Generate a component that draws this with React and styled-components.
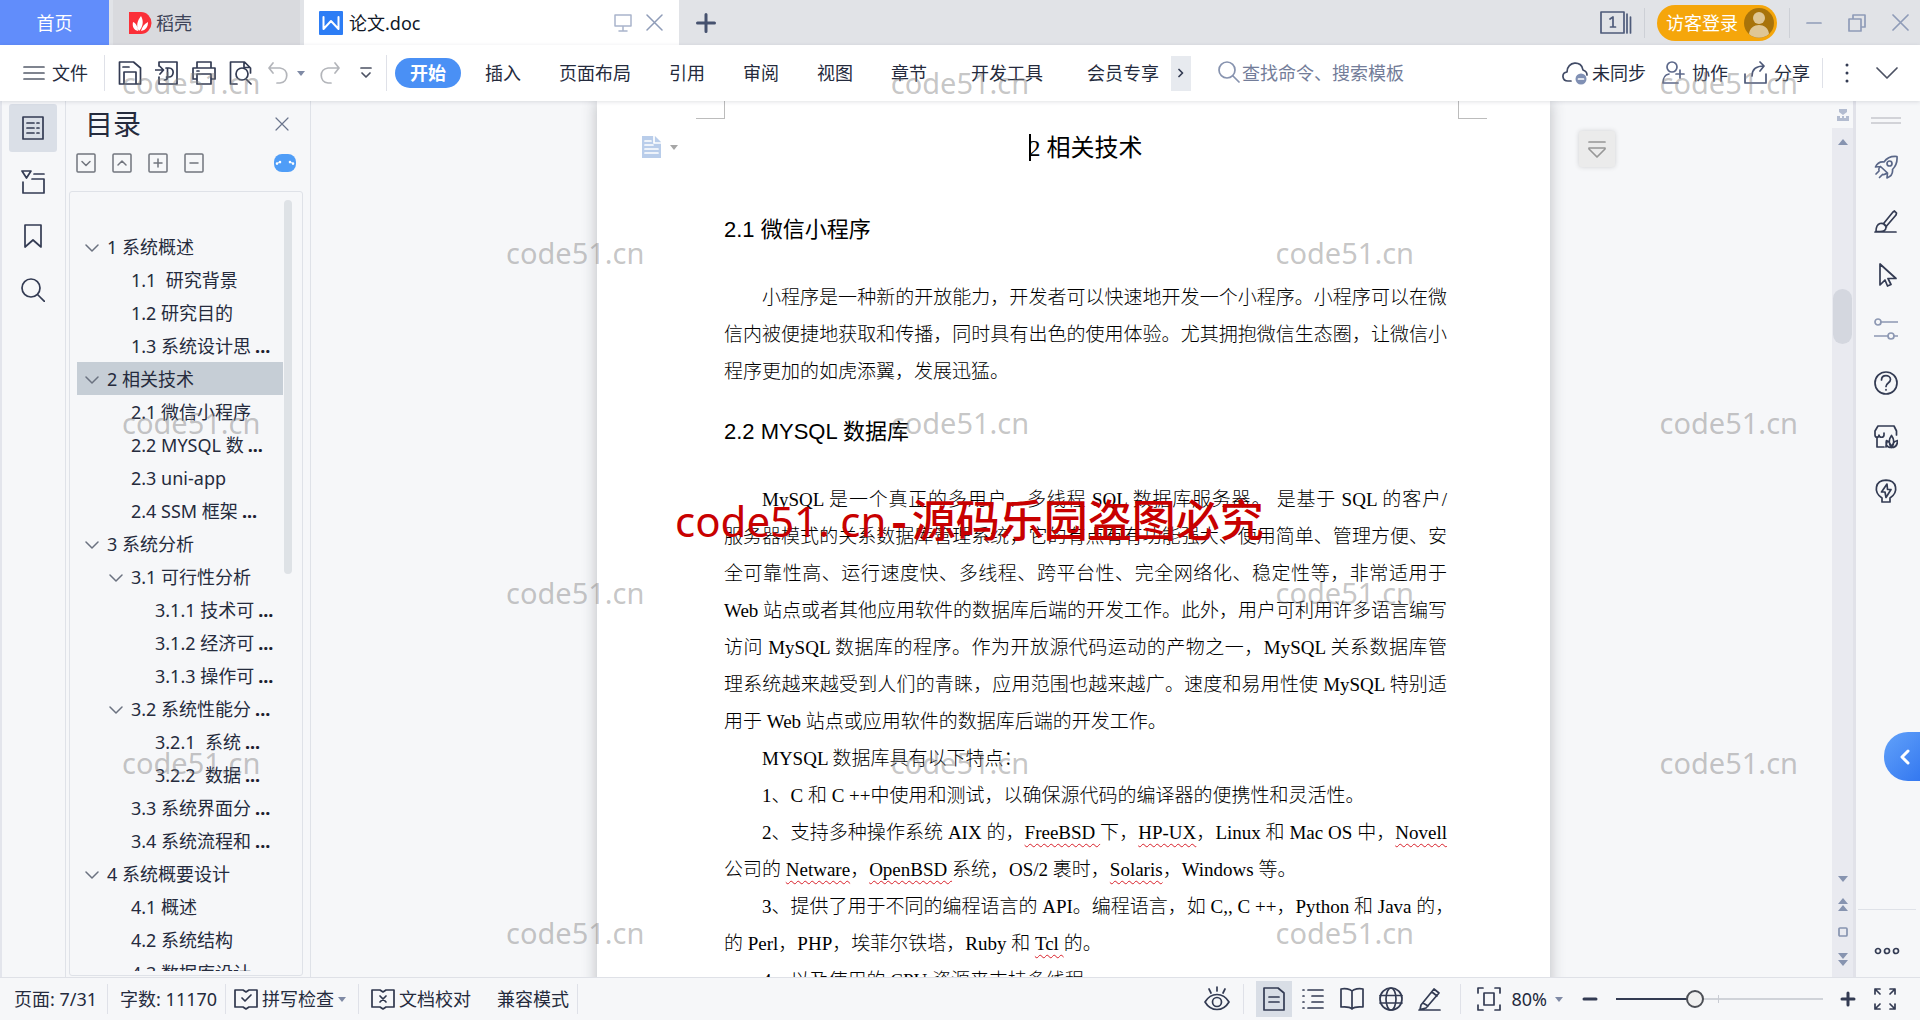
import React from "react";
import styled, { createGlobalStyle, css } from "styled-components";

const Global = createGlobalStyle`
  *, *::before, *::after { box-sizing: border-box; }
  html, body, #root { height: 100%; }
  body {
    margin: 0;
    overflow: hidden;
    color: #252b3d;
    font: 18px/24px "Noto Sans", "Noto Sans CJK SC", sans-serif;
  }
  button, input { font: inherit; color: inherit; }
  button { border: 0; padding: 0; background: none; white-space: nowrap; }
  h1, h2, p, ul { margin: 0; padding: 0; font-weight: 400; }
  ul { list-style: none; }
`;

/* ---------- shared parts ---------- */

const Svg = styled.svg`
  display: block;
  flex: none;
  fill: none;
  stroke: ${(p) => p.$color || "#333b53"};
  stroke-width: ${(p) => p.$w || 1.7};
  stroke-linecap: round;
  stroke-linejoin: round;
`;

const Icon = ({ w = 24, h = 24, color, sw, children }) => (
  <Svg width={w} height={h} viewBox={`0 0 ${w} ${h}`} $color={color} $w={sw} aria-hidden="true">
    {children}
  </Svg>
);

const Caret = ({ color = "#7f8aa5" }) => (
  <Svg width="8" height="6" viewBox="0 0 8 6" aria-hidden="true">
    <path d="M0 1h8L4 6z" fill={color} stroke="none" />
  </Svg>
);

const Divider = styled.span`
  flex: none;
  width: 1px;
  height: ${(p) => p.$h || 30}px;
  background: ${(p) => p.$color || "#dfe1e8"};
`;

const Row = styled.div`
  display: flex;
  align-items: center;
  gap: ${(p) => p.$gap || 0}px;
`;

const TextButton = styled.button`
  display: flex;
  align-items: center;
  gap: ${(p) => p.$gap || 6}px;
`;

const Shell = styled.div`
  position: relative;
  display: flex;
  flex-direction: column;
  height: 100vh;
  overflow: hidden;
  background: #f6f7f9;
`;

/* ---------- title bar ---------- */

const TitleBar = styled.header`
  display: flex;
  align-items: center;
  justify-content: space-between;
  flex: none;
  height: 45px;
  background: #e1e3e7;
`;

const Tabs = styled.div`
  display: flex;
  gap: 4px;
  height: 45px;
`;

const Tab = styled.button`
  display: flex;
  align-items: center;
  gap: 6px;
  height: 45px;
  ${(p) =>
    p.$kind === "home" &&
    css`
      width: 109px;
      justify-content: center;
      color: #fff;
      background: #618dfb;
    `}
  ${(p) =>
    p.$kind === "idle" &&
    css`
      width: 187px;
      gap: 4px;
      padding-left: 16px;
      color: #3d4358;
      background: #d9dade;
    `}
`;

const ActiveTab = styled.div`
  display: flex;
  align-items: center;
  justify-content: space-between;
  width: 375px;
  padding: 0 16px 0 15px;
  color: #111827;
  background: #fff;
`;

const AddTab = styled.button`
  display: grid;
  place-items: center;
  width: 45px;
`;

const WindowControls = styled.div`
  display: flex;
  align-items: center;
  gap: 16px;
  padding-right: 11px;
`;

const LoginButton = styled.button`
  display: flex;
  align-items: center;
  gap: 6px;
  height: 36px;
  padding: 0 3px 0 9px;
  border-radius: 18px;
  color: #fff;
  background: #f5a60b;
`;

/* ---------- ribbon ---------- */

const Ribbon = styled.div`
  position: relative;
  z-index: 1;
  display: flex;
  align-items: center;
  justify-content: space-between;
  flex: none;
  height: 56px;
  padding: 0 21px 0 23px;
  background: #fff;
  box-shadow: 0 1px 4px rgba(40, 50, 70, 0.14);
`;

const QuickTools = styled.div`
  display: flex;
  align-items: center;
  gap: 13px;
  padding: 0 9px 0 16px;
`;

const MenuTabs = styled.nav`
  display: flex;
  align-items: center;
  gap: 38px;
  padding-left: 8px;
`;

const StartTab = styled.button`
  width: 66px;
  height: 30px;
  margin-right: -14px;
  border-radius: 15px;
  color: #fff;
  font-weight: 700;
  background: #4a90f5;
`;

const MenuTab = styled.button`
  padding: 0 ${(p) => (p.$wide ? 6 : 0)}px;
`;

const MoreTabs = styled.button`
  display: grid;
  place-items: center;
  width: 20px;
  height: 35px;
  margin: 0 27px 0 12px;
  background: #e7eaef;
`;

const Search = styled.label`
  display: flex;
  align-items: center;
  gap: 2px;
  input {
    width: 190px;
    padding: 0;
    border: 0;
    outline: 0;
    background: none;
  }
  input::placeholder { color: #737d99; opacity: 1; }
`;

/* ---------- left side ---------- */

const Main = styled.div`
  display: flex;
  flex: 1;
  min-height: 0;
`;

const Rail = styled.div`
  display: flex;
  flex-direction: column;
  align-items: center;
  flex: none;
  gap: 6px;
  width: 66px;
  padding: 3px 2px 3px 0;
  border-left: 2px solid #e3e5ec;
  border-right: 1px solid #dfe2e8;
`;

const RailButton = styled.button`
  display: grid;
  place-items: center;
  width: 48px;
  height: 48px;
  border-radius: 3px;
  background: ${(p) => (p.$on ? "#dadfe7" : "none")};
`;

const Panel = styled.aside`
  display: flex;
  flex-direction: column;
  flex: none;
  width: 245px;
  padding: 0 7px 1px 3px;
  border-right: 1px solid #dfe2e8;
`;

const PanelHead = styled.div`
  display: flex;
  align-items: center;
  justify-content: space-between;
  padding: 4px 14px 8px 16px;
  h2 { font-size: 28px; line-height: 38px; }
`;

const PanelTools = styled.div`
  display: flex;
  align-items: center;
  justify-content: space-between;
  height: 24px;
  padding: 0 7px;
`;

const Outline = styled.div`
  display: flex;
  flex: 1;
  min-height: 0;
  margin-top: 16px;
  padding: 8px 10px 4px 7px;
  border: 1px solid #dfe2e8;
  border-radius: 3px;
`;

const OutlineList = styled.ul`
  flex: 1;
  min-width: 0;
  padding-top: 30px;
  overflow: hidden;
`;

const OutlineItem = styled.button`
  display: flex;
  align-items: center;
  width: 100%;
  height: 33px;
  padding-left: ${(p) => p.$level * 24 - 16}px;
  text-align: left;
  white-space: pre;
  background: ${(p) => (p.$on ? "#c6ced6" : "none")};
`;

const Twisty = styled.span`
  flex: none;
  width: 22px;
`;

const Dots = styled.span`
  padding-left: 4px;
  color: #1c2130;
  font-weight: 700;
`;

const OutlineThumb = styled.span`
  flex: none;
  width: 8px;
  height: 374px;
  margin-left: 1px;
  border-radius: 4px;
  background: #dee2e6;
`;

/* ---------- document ---------- */

const Viewport = styled.main`
  position: relative;
  flex: 1;
  min-width: 0;
  padding-left: 4px;
  overflow: hidden;
`;

const Page = styled.article`
  position: relative;
  width: 953px;
  min-height: 100%;
  margin: 0 auto;
  padding: 29px 103px 0 127px;
  color: #000;
  background: #fff;
  box-shadow: 0 0 14px rgba(60, 65, 75, 0.32);
`;

const Corner = styled.span`
  position: absolute;
  top: 0;
  width: 29px;
  height: 18px;
  border-bottom: 1px solid #bcbcbc;
  ${(p) =>
    p.$right
      ? css`right: 63px; border-left: 1px solid #bcbcbc;`
      : css`left: 99px; border-right: 1px solid #bcbcbc;`}
`;

const PageMenu = styled.button`
  position: absolute;
  top: 34px;
  left: 45px;
  display: flex;
  align-items: center;
  gap: 9px;
`;

const Title = styled.h1`
  display: flex;
  justify-content: center;
  gap: 6px;
  font: 24px/36px "Liberation Serif", "Noto Sans CJK SC", serif;
`;

const TextCaret = styled.span`
  width: 2px;
  height: 27px;
  margin: 4px -8px 0 0;
  background: #000;
`;

const Heading = styled.h2`
  margin: ${(p) => (p.$first ? 48 : 26)}px 0 33px;
  font: 22px/32px "Liberation Sans", "Noto Sans CJK SC", sans-serif;
`;

const Paragraph = styled.p`
  font: 300 19px/37px "Liberation Serif", "Noto Sans CJK SC", serif;
`;

const Line = styled.span`
  display: block;
  white-space: nowrap;
  text-indent: ${(p) => (p.$indent ? 38 : 0)}px;
  text-align-last: ${(p) => (p.$full ? "justify" : "left")};
`;

const Typo = styled.span`
  text-decoration: underline wavy #d8202a 1px;
  text-underline-offset: 4px;
  text-decoration-skip-ink: none;
`;

const FloatButton = styled.button`
  position: absolute;
  top: 30px;
  right: 217px;
  display: grid;
  place-items: center;
  width: 36px;
  height: 36px;
  border-radius: 3px;
  background: #ebebeb;
  box-shadow: 0 0 5px rgba(0, 0, 0, 0.16);
`;

/* ---------- right side ---------- */

const ScrollBar = styled.div`
  display: flex;
  flex-direction: column;
  flex: none;
  width: 24px;
  border-right: 3px solid #e1e2e9;
`;

const ScrollTop = styled.div`
  display: grid;
  place-items: center;
  height: 27px;
`;

const ScrollTrack = styled.div`
  display: flex;
  flex: 1;
  flex-direction: column;
  align-items: center;
  justify-content: space-between;
  padding: 10px 0 11px;
  background: #e9eaf0;
`;

const ScrollThumb = styled.span`
  width: 19px;
  height: 55px;
  margin-top: 143px;
  border-radius: 10px;
  background: #d4d7df;
`;

const ScrollGroup = styled.div`
  display: flex;
  flex-direction: column;
  align-items: center;
  gap: ${(p) => p.$gap || 0}px;
`;

const ToolRail = styled.div`
  display: flex;
  flex-direction: column;
  justify-content: space-between;
  flex: none;
  width: 64px;
`;

const ToolStack = styled.div`
  display: flex;
  flex-direction: column;
  align-items: center;
  gap: 26px;
  padding: 14px 4px 0 0;
`;

const SideButton = styled.button`
  display: grid;
  place-items: center;
  height: 28px;
`;

const ToolMore = styled.div`
  display: flex;
  justify-content: center;
  height: 68px;
  margin: 0 4px 0 2px;
  padding-top: 14px;
  border-top: 1px solid #dfe2e8;
`;

const Expand = styled.button`
  position: absolute;
  top: 732px;
  right: 0;
  z-index: 2;
  display: grid;
  place-items: center;
  width: 36px;
  height: 49px;
  padding-left: 6px;
  border-radius: 24px 0 0 24px;
  background: linear-gradient(135deg, #62a2fa, #3478f0);
`;

/* ---------- status bar ---------- */

const StatusBar = styled.footer`
  display: flex;
  align-items: center;
  justify-content: space-between;
  flex: none;
  height: 43px;
  padding: 0 23px 0 14px;
  border-top: 1px solid #dfe1e7;
  background: #f6f7f9;
`;

const ModeLabel = styled.span`
  padding-left: 14px;
`;

const ViewButton = styled.button`
  display: grid;
  place-items: center;
  width: 36px;
  height: 36px;
  background: ${(p) => (p.$on ? "#d9dee6" : "none")};
`;

const ZoomBox = styled.div`
  display: flex;
  align-items: center;
  gap: 10px;
  padding: 0 19px 0 16px;
`;

const ZoomRange = styled.input`
  appearance: none;
  width: 207px;
  height: 20px;
  margin: 0 17px 0 18px;
  background:
    linear-gradient(#c9ccd3, #c9ccd3) 102px 6px / 1px 8px no-repeat,
    linear-gradient(90deg, #333b53 38%, #d0d3d9 38%) 0 9px / 100% 2px no-repeat;
  &::-webkit-slider-thumb {
    appearance: none;
    width: 18px;
    height: 18px;
    border: 2px solid #4c4f56;
    border-radius: 50%;
    background: #f0f0f0;
  }
`;

const FullScreen = styled.button`
  padding-left: 17px;
`;

/* ---------- watermarks ---------- */

const Watermarks = styled.div`
  position: absolute;
  inset: 0;
  z-index: 3;
  overflow: hidden;
  pointer-events: none;
  color: rgba(128, 128, 128, 0.45);
  font: 29px/40px "Noto Sans", sans-serif;
`;

const WatermarkRow = styled.div`
  display: flex;
  justify-content: space-between;
  margin: ${(p) => (p.$first ? 63 : 130)}px ${(p) => (p.$inner ? 506 : 122)}px 0;
`;

const RedMark = styled.div`
  position: absolute;
  top: 488px;
  left: 675px;
  color: #c80000;
  font: 500 44px/60px "Noto Sans CJK SC", sans-serif;
  white-space: nowrap;
`;

const RedLatin = styled.span`
  font: 400 42px/60px "Noto Sans", sans-serif;
`;

const RedDash = styled.span`
  font: 700 42px/60px "Liberation Mono", monospace;
`;

/* ---------- data ---------- */

const outline = [
  [1, "1 系统概述", true],
  [2, "1.1  研究背景"],
  [2, "1.2 研究目的"],
  [2, "1.3 系统设计思..."],
  [1, "2 相关技术", true],
  [2, "2.1 微信小程序"],
  [2, "2.2 MYSQL 数..."],
  [2, "2.3 uni-app"],
  [2, "2.4 SSM 框架..."],
  [1, "3 系统分析", true],
  [2, "3.1 可行性分析", true],
  [3, "3.1.1 技术可..."],
  [3, "3.1.2 经济可..."],
  [3, "3.1.3 操作可..."],
  [2, "3.2 系统性能分...", true],
  [3, "3.2.1  系统..."],
  [3, "3.2.2  数据..."],
  [2, "3.3 系统界面分..."],
  [2, "3.4 系统流程和..."],
  [1, "4 系统概要设计", true],
  [2, "4.1 概述"],
  [2, "4.2 系统结构"],
  [2, "4.3 数据库设计"],
];

const intro = [
  ["小程序是一种新的开放能力，开发者可以快速地开发一个小程序。小程序可以在微", 1, 1],
  ["信内被便捷地获取和传播，同时具有出色的使用体验。尤其拥抱微信生态圈，让微信小", 0, 1],
  ["程序更加的如虎添翼，发展迅猛。", 0, 0],
];

const mysql = [
  ["MySQL 是一个真正的多用户、多线程 SQL 数据库服务器。 是基于 SQL 的客户/", 1, 1],
  ["服务器模式的关系数据库管理系统，它的有点有有功能强大、使用简单、管理方便、安", 0, 1],
  ["全可靠性高、运行速度快、多线程、跨平台性、完全网络化、稳定性等，非常适用于", 0, 1],
  ["Web 站点或者其他应用软件的数据库后端的开发工作。此外，用户可利用许多语言编写", 0, 1],
  ["访问 MySQL 数据库的程序。作为开放源代码运动的产物之一，MySQL 关系数据库管", 0, 1],
  ["理系统越来越受到人们的青睐，应用范围也越来越广。速度和易用性使 MySQL 特别适", 0, 1],
  ["用于 Web 站点或应用软件的数据库后端的开发工作。", 0, 0],
  ["MYSQL 数据库具有以下特点：", 1, 0],
  ["1、C 和 C ++中使用和测试，以确保源代码的编译器的便携性和灵活性。", 1, 0],
  [<>2、支持多种操作系统 AIX 的，<Typo>FreeBSD </Typo>下，<Typo>HP-UX</Typo>，Linux 和 Mac OS 中，<Typo>Novell</Typo></>, 1, 1],
  [<>公司的 <Typo>Netware</Typo>，<Typo>OpenBSD </Typo>系统，OS/2 裹时，<Typo>Solaris</Typo>，Windows 等。</>, 0, 0],
  ["3、提供了用于不同的编程语言的 API。编程语言，如 C,, C ++，Python 和 Java 的，", 1, 1],
  [<>的 Perl，PHP，埃菲尔铁塔，Ruby 和 <Typo>Tcl </Typo>的。</>, 0, 0],
  ["4、以及使用的 CPU 资源来支持多线程。", 1, 0],
];

const Lines = ({ lines }) => (
  <Paragraph>
    {lines.map(([text, indent, full], i) => (
      <Line key={i} $indent={indent} $full={full}>{text}</Line>
    ))}
  </Paragraph>
);

const panelTools = [
  ["展开", "M6 8.5l4 4 4-4"],
  ["收起", "M6 12l4-4 4 4"],
  ["增加", "M6 10h8M10 6v8"],
  ["减少", "M6 10h8"],
];

const sideTools = [
  ["快捷工具", "#5a6788", <>
    <path d="M23 1.500c-6-.6-10 1.200-13 5.500C6 6.500 3 8.500 1.500 12l5-.5 7 6.500-.5 5c4-1.500 6-4.500 5.500-8.500C22 11 23.500 7 23 1.500zM6.500 11.500c-1 1-2 3-1.500 3.500M13 18c-1 .8-2.500 2-4 1.500" />
    <circle cx="15.500" cy="8.500" r="2.500" /><path d="M5 16l-3 3M8.500 19.500l-3 3" /></>],
  ["样式", null, <>
    <path d="M1 23h21M10 14l9-11 1.500-1 2 2-.5 2-9 10.500M2 22.500c0-4 1-7 4-8 3-.8 6 1 6 4-.2 3-3 4-6 4zM9 14.500l3.500 3.500" /></>],
  ["选择", null, <path d="M6 1v21l5-5 2.500 6 3.500-1.500-3-6h8z" />],
  ["设置", "#8d98b3", <>
    <circle cx="4" cy="5" r="3" /><path d="M7 5h17M0 19h14M20 19h4" /><circle cx="17" cy="19" r="3" /></>],
  ["帮助", null, <>
    <circle cx="12" cy="12" r="11" /><path d="M7.500 9c0-6 9-5.500 9-.5 0 3.500-4.500 3.500-4.500 7M12 18.500v.5" /></>],
  ["稻壳资源", null, <>
    <path d="M22.500 10V6l-2.500-5H4L1 6v4c0 3 4 3 4 0 0 3 5 3 5 0V8M3 12v10h7M12 22c0-3 1-5 1-5M17.500 22.500c-3-4-3-8 0-12 3 4 3 8 0 12zM17.500 22.500c-5 0-6-3-5-7 3 1 4 3 5 7zM17.500 22.500c5 0 6-3 6-7-4 1-5 3-6 7z" /></>],
  ["灵感", null, <>
    <path d="M8 23v-4C-1 13 1 1.500 12 1.200 23 1.500 25 13 16 19v4zM13 5l-5.500 8H11l1 5.500 5-8h-3.500z" /></>],
];

const Book = ({ children }) => (
  <Icon w={24} h={24} color="#2f374d">
    <path d="M1 3h8l3 2 3-2h8v17h-8l-3 2-3-2H1z" />{children}
  </Icon>
);

const OutlineText = ({ text }) =>
  text.endsWith("...") ? <>{text.slice(0, -3)}<Dots>...</Dots></> : text;

export default function App() {
  return (
    <Shell>
      <Global />
      <TitleBar>
        <Tabs>
          <Tab $kind="home">首页</Tab>
          <Tab $kind="idle">
            <Icon w={23} h={24}>
              <path d="M0 1h12a10.500 11 0 0 1 0 22H0z" fill="#fb2f38" stroke="none" />
              <path d="M10 20C7 15 8 10 12 5c3 5 2 11-2 15zM9 20c-4-1-6-4-5-9 3 1 5 5 5 9zM12 20c5-1 7-4 7-9-4 2-6 5-7 9z" fill="#fff" stroke="none" />
            </Icon>
            稻壳
          </Tab>
          <ActiveTab>
            <Row $gap={6}>
              <Icon w={24} h={24}>
                <rect width="24" height="24" rx="1" fill="#2d7df5" stroke="none" />
                <path d="M4.500 6v12l7.500-8 7.500 8V6" stroke="#fff" strokeWidth="2" />
              </Icon>
              论文.doc
            </Row>
            <Row $gap={14}>
              <Icon w={18} h={18} color="#a9b4cb" sw={1.500}><path d="M1 1h16v11H1zM9 12v4M5 17h8" /></Icon>
              <TextButton aria-label="关闭文档"><Icon w={17} h={17} color="#8f9cb8" sw={1.500}><path d="M1 1l15 15M16 1L1 16" /></Icon></TextButton>
            </Row>
          </ActiveTab>
          <AddTab aria-label="新建">
            <Icon w={20} h={20} color="#46526f" sw={3}><path d="M1.500 10h17M10 1.500v17" /></Icon>
          </AddTab>
        </Tabs>
        <WindowControls>
          <Row $gap={12}>
            <Icon w={32} h={24} color="#4e5b7a">
              <path d="M1 1h23v21H1zM27 3v19M30.500 6v16M10 8l3-2v10M10.500 16h5" />
            </Icon>
            <Divider $color="#cdd0d6" />
            <LoginButton>
              访客登录
              <Icon w={30} h={30}>
                <circle cx="15" cy="15" r="15" fill="#a8730a" stroke="none" />
                <circle cx="15" cy="10" r="6" fill="#dfc694" stroke="none" />
                <path d="M5 26c1-12 19-12 20 0a15 15 0 0 1-20 0z" fill="#dfc694" stroke="none" />
              </Icon>
            </LoginButton>
            <Divider $color="#cdd0d6" />
          </Row>
          <Row $gap={26}>
            <TextButton aria-label="最小化"><Icon w={16} h={18} color="#8f9cb8"><path d="M1 9h14" /></Icon></TextButton>
            <TextButton aria-label="还原"><Icon w={18} h={18} color="#8f9cb8"><path d="M1 5h12v12H1zM5 5V1h12v12h-4" /></Icon></TextButton>
            <TextButton aria-label="关闭"><Icon w={17} h={17} color="#8f9cb8"><path d="M1 1l15 15M16 1L1 16" /></Icon></TextButton>
          </Row>
        </WindowControls>
      </TitleBar>

      <Ribbon>
        <Row>
          <TextButton $gap={7}>
            <Icon w={22} h={16} color="#565c6b"><path d="M1 2h20M1 8h20M1 14h20" /></Icon>
            文件
          </TextButton>
          <QuickTools>
            <Divider $h={36} />
            <TextButton aria-label="保存"><Icon><path d="M1.500 1h14l7 6v16h-21zM6 22V11h12v11M5 6h6" /></Icon></TextButton>
            <TextButton aria-label="输出为PDF"><Icon><path d="M4 5V1h18v22H4v-7M0 9h8M5 5.500L8.500 9 5 13M11 7h3c6 0 5 9 0 9h-2.500M12.500 8v8c0 2-1 3-3 3" /></Icon></TextButton>
            <TextButton aria-label="打印"><Icon><path d="M5 7V1h14v6M5 18H1V7h22v11h-4M5 13h14v10H5zM5 10h2" /></Icon></TextButton>
            <TextButton aria-label="打印预览"><Icon><path d="M8 23H1.500V1h14l6 6v5M15 1.500v5h6" /><circle cx="13" cy="13" r="6" /><path d="M17 18l5 5" /></Icon></TextButton>
            <TextButton aria-label="撤销" $gap={7}>
              <Icon w={24} h={24} color="#b3b5ba"><path d="M7 2L3 7l4 5M3 7h11c9 1 9 14 0 15h-3" /></Icon>
              <Caret />
            </TextButton>
            <TextButton aria-label="恢复"><Icon w={24} h={24} color="#b3b5ba"><path d="M17 2l4 5-4 5M21 7H10C1 8 1 21 10 22h3" /></Icon></TextButton>
            <TextButton aria-label="更多工具"><Icon w={22} h={12} color="#4c5263"><path d="M6 1h10M7 6l4 4 4-4" /></Icon></TextButton>
          </QuickTools>
          <Divider $h={36} />
          <MenuTabs>
            <StartTab>开始</StartTab>
            <MenuTab>插入</MenuTab>
            <MenuTab>页面布局</MenuTab>
            <MenuTab>引用</MenuTab>
            <MenuTab>审阅</MenuTab>
            <MenuTab>视图</MenuTab>
            <MenuTab>章节</MenuTab>
            <MenuTab $wide>开发工具</MenuTab>
            <MenuTab>会员专享</MenuTab>
          </MenuTabs>
          <MoreTabs aria-label="更多选项卡"><Icon w={6} h={10}><path d="M1 1.500L4.500 5 1 8.500" /></Icon></MoreTabs>
          <Search>
            <Icon w={22} h={24} color="#8793af"><circle cx="9" cy="9" r="8" /><path d="M15 15l6 6" /></Icon>
            <input type="text" aria-label="查找命令" placeholder="查找命令、搜索模板" />
          </Search>
        </Row>
        <Row $gap={12}>
          <Row $gap={16}>
            <TextButton $gap={4}>
              <Icon w={26} h={24} color="#414b66">
                <path d="M9 20H6C0 20-1 12 5 11 5 0 20-1 21 9c3 1 4 3 4 5" />
                <circle cx="19" cy="18" r="5.500" fill="#8090b4" stroke="none" /><path d="M16.500 18h5" stroke="#fff" />
              </Icon>
              未同步
            </TextButton>
            <TextButton $gap={6}>
              <Icon w={24} h={24} color="#5c688a"><circle cx="10" cy="6" r="5" /><path d="M7 13c-5 1-6 4-6 9h15M18 9v8M14 13h8" /></Icon>
              协作
            </TextButton>
            <TextButton $gap={6}>
              <Icon w={24} h={24} color="#4c5878"><path d="M8 15c0-7 4-10 12-10M16 1l4 4-4 5M1 13v9h21v-9" /></Icon>
              分享
            </TextButton>
          </Row>
          <Divider />
          <Row $gap={16}>
            <TextButton aria-label="更多"><Icon w={24} h={20}><path d="M12 2v.1M12 10v.1M12 18v.1" strokeWidth="3" /></Icon></TextButton>
            <TextButton aria-label="折叠功能区"><Icon w={24} h={14} color="#4c5263"><path d="M2 2l10 10L22 2" /></Icon></TextButton>
          </Row>
        </Row>
      </Ribbon>

      <Main>
        <Rail>
          <RailButton $on aria-label="目录"><Icon w={22} h={24}><path d="M1 1h20v22H1zM5 7h7M15 7h2M5 12h7M15 12h2M5 17h7M15 17h2" /></Icon></RailButton>
          <RailButton aria-label="章节导航"><Icon w={24} h={24}><path d="M1 1h9L5.500 8zM13 4h10M11 9h12v14H2V12" /></Icon></RailButton>
          <RailButton aria-label="书签"><Icon w={18} h={24}><path d="M1 1h16v22l-8-7-8 7z" /></Icon></RailButton>
          <RailButton aria-label="查找"><Icon w={24} h={24}><circle cx="10" cy="10" r="9" /><path d="M17 17l6.500 6.500" /></Icon></RailButton>
        </Rail>

        <Panel>
          <PanelHead>
            <h2>目录</h2>
            <TextButton aria-label="关闭目录"><Icon w={14} h={14} color="#6a748c" sw={1.200}><path d="M1 1l12 12M13 1L1 13" /></Icon></TextButton>
          </PanelHead>
          <PanelTools>
            <Row $gap={16}>
              {panelTools.map(([label, d]) => (
                <TextButton key={label} aria-label={label}>
                  <Icon w={20} h={20} color="#71757e" sw={1.500}><rect x="1" y="1" width="18" height="18" rx="1" /><path d={d} /></Icon>
                </TextButton>
              ))}
            </Row>
            <TextButton aria-label="智能识别目录">
              <Icon w={22} h={18}>
                <rect width="22" height="18" rx="8" fill="#4f9df7" stroke="none" />
                <path d="M3 9.500l3-1.500M19 9.500l-3-1.500" stroke="#fff" strokeWidth="1" />
                <path d="M3 9.500v.1M6 8v.1M16 8v.1M19 9.500v.1" stroke="#fff" strokeWidth="2.600" />
              </Icon>
            </TextButton>
          </PanelTools>
          <Outline>
            <OutlineList>
              {outline.map(([level, text, open]) => (
                <li key={text}>
                  <OutlineItem $level={level} $on={text === "2 相关技术"}>
                    <Twisty>
                      {open && <Icon w={14} h={14} color="#6b7280" sw={1.500}><path d="M1 5l6 6 6-6" /></Icon>}
                    </Twisty>
                    <OutlineText text={text} />
                  </OutlineItem>
                </li>
              ))}
            </OutlineList>
            <OutlineThumb />
          </Outline>
        </Panel>

        <Viewport>
          <Page>
            <Corner />
            <Corner $right />
            <PageMenu aria-label="段落布局">
              <Icon w={19} h={24}>
                <path d="M0 1h13l6 6v16H0z" fill="#b9cdea" stroke="none" />
                <path d="M12 1v7h7M3 6h6M3 10h8M3 14h13M3 18h13" stroke="#fff" />
              </Icon>
              <Caret color="#a6a6a6" />
            </PageMenu>
            <Title><TextCaret /><span>2 相关技术</span></Title>
            <Heading $first>2.1 微信小程序</Heading>
            <Lines lines={intro} />
            <Heading>2.2 MYSQL 数据库</Heading>
            <Lines lines={mysql} />
          </Page>
          <FloatButton aria-label="收起"><Icon w={18} h={18} color="#979797"><path d="M1 2h16M1 8h16v1l-8 8-8-8z" /></Icon></FloatButton>
        </Viewport>

        <ScrollBar>
          <ScrollTop>
            <Icon w={14} h={14}><path d="M3 1h8v3L7 7 3 4zM1 8h3v2h2V8h2v2h2V8h3v5H1z" fill="#b3bcd0" stroke="none" /></Icon>
          </ScrollTop>
          <ScrollTrack>
            <ScrollGroup>
              <Icon w={10} h={8}><path d="M0 7l5-6 5 6z" fill="#8794b0" stroke="none" /></Icon>
              <ScrollThumb />
            </ScrollGroup>
            <ScrollGroup $gap={15}>
              <Icon w={10} h={8}><path d="M0 1l5 6 5-6z" fill="#8794b0" stroke="none" /></Icon>
              <Icon w={10} h={13}><path d="M0 6l5-6 5 6zM0 13l5-6 5 6z" fill="#8794b0" stroke="none" /></Icon>
              <Icon w={10} h={12} color="#8794b0"><rect x="1" y="2" width="8" height="8" rx="1" /></Icon>
              <Icon w={10} h={13}><path d="M0 0l5 6 5-6zM0 7l5 6 5-6z" fill="#8794b0" stroke="none" /></Icon>
            </ScrollGroup>
          </ScrollTrack>
        </ScrollBar>

        <ToolRail>
          <ToolStack>
            <Icon w={30} h={12} color="#c6c8cd"><path d="M0 3h30M0 8h30" /></Icon>
            {sideTools.map(([label, color, art]) => (
              <SideButton key={label} aria-label={label}>
                <Icon color={color}>{art}</Icon>
              </SideButton>
            ))}
          </ToolStack>
          <ToolMore>
            <TextButton aria-label="更多工具"><Icon w={26} h={8}><circle cx="4" cy="4" r="2.500" /><circle cx="13" cy="4" r="2.500" /><circle cx="22" cy="4" r="2.500" /></Icon></TextButton>
          </ToolMore>
        </ToolRail>
      </Main>

      <StatusBar>
        <Row $gap={12}>
          <Row $gap={10}>
            <span>页面: 7/31</span>
            <Divider />
          </Row>
          <Row $gap={8}>
            <span>字数: 11170</span>
            <Divider />
            <TextButton $gap={4}>
              <Book><path d="M8 11l3 3 6-6" /></Book>
              拼写检查
              <Caret />
            </TextButton>
          </Row>
          <Divider />
          <TextButton $gap={4}>
            <Book><path d="M9 9l6 6M15 9l-6 6" /></Book>
            文档校对
          </TextButton>
          <Row $gap={8}>
            <ModeLabel>兼容模式</ModeLabel>
            <Divider />
          </Row>
        </Row>
        <Row>
          <Row $gap={12}>
            <TextButton aria-label="护眼模式"><Icon w={28} h={26}><path d="M2 16c6-10 18-10 24 0-6 10-18 10-24 0zM14 1v4M6 3l2 4M22 3l-2 4" /><circle cx="14" cy="16" r="4.500" /></Icon></TextButton>
            <Divider />
            <Row $gap={3}>
              <ViewButton $on aria-label="页面视图"><Icon w={22} h={24}><path d="M1 1h14l6 5v17H1zM6 10h10M6 15h10" /></Icon></ViewButton>
              <ViewButton aria-label="大纲"><Icon w={22} h={24}><path d="M1 3h1M6 3h15M1 9h1M10 9h11M1 15h1M10 15h11M1 21h1M6 21h15" /></Icon></ViewButton>
              <ViewButton aria-label="阅读版式"><Icon w={24} h={24}><path d="M12 4C10 2 5 1 1 2v18c5-.5 9 0 11 2 2-2 6-2.500 11-2V2c-4-1-9 0-11 2zM12 4v18" /></Icon></ViewButton>
              <ViewButton aria-label="网页版式"><Icon w={24} h={24}><circle cx="12" cy="12" r="11" /><ellipse cx="12" cy="12" rx="5" ry="11" /><path d="M1 8.500h22M1 16h22" /></Icon></ViewButton>
              <ViewButton aria-label="写作模式"><Icon w={24} h={24}><path d="M1 23h21M3 18L16 2l5 4L8 21l-6 1.500zM5 16l5 3M14 5l5 4" /></Icon></ViewButton>
            </Row>
            <Divider />
          </Row>
          <ZoomBox>
            <TextButton aria-label="最佳缩放比例"><Icon w={24} h={24}><path d="M1 6V1h5M18 1h5v5M23 18v5h-5M6 23H1v-5M7 6h10v12H7z" /></Icon></TextButton>
            <TextButton $gap={8}>80%<Caret /></TextButton>
          </ZoomBox>
          <TextButton aria-label="缩小"><Icon w={16} h={18} sw={3}><path d="M2 9h12" /></Icon></TextButton>
          <ZoomRange type="range" aria-label="缩放" min="0" max="100" defaultValue="37" />
          <TextButton aria-label="放大"><Icon w={16} h={18} sw={3}><path d="M2 9h12M8 3v12" /></Icon></TextButton>
          <FullScreen aria-label="全屏"><Icon w={24} h={24}><path d="M2 7V2h5M2 2l5 5M17 2h5v5M22 2l-5 5M22 17v5h-5M22 22l-5-5M7 22H2v-5M2 22l5-5" /></Icon></FullScreen>
        </Row>
      </StatusBar>

      <Expand aria-label="展开侧栏"><Icon w={12} h={16} sw={3} color="#fff"><path d="M9 2L3 8l6 6" /></Icon></Expand>

      <Watermarks aria-hidden="true">
        {[3, 2, 3, 2, 3, 2].map((n, i) => (
          <WatermarkRow key={i} $first={i === 0} $inner={n === 2}>
            {Array.from({ length: n }, (_, k) => <span key={k}>code51.cn</span>)}
          </WatermarkRow>
        ))}
        <RedMark><RedLatin>code51. cn</RedLatin><RedDash>-</RedDash>源码乐园盗图必究</RedMark>
      </Watermarks>
    </Shell>
  );
}
